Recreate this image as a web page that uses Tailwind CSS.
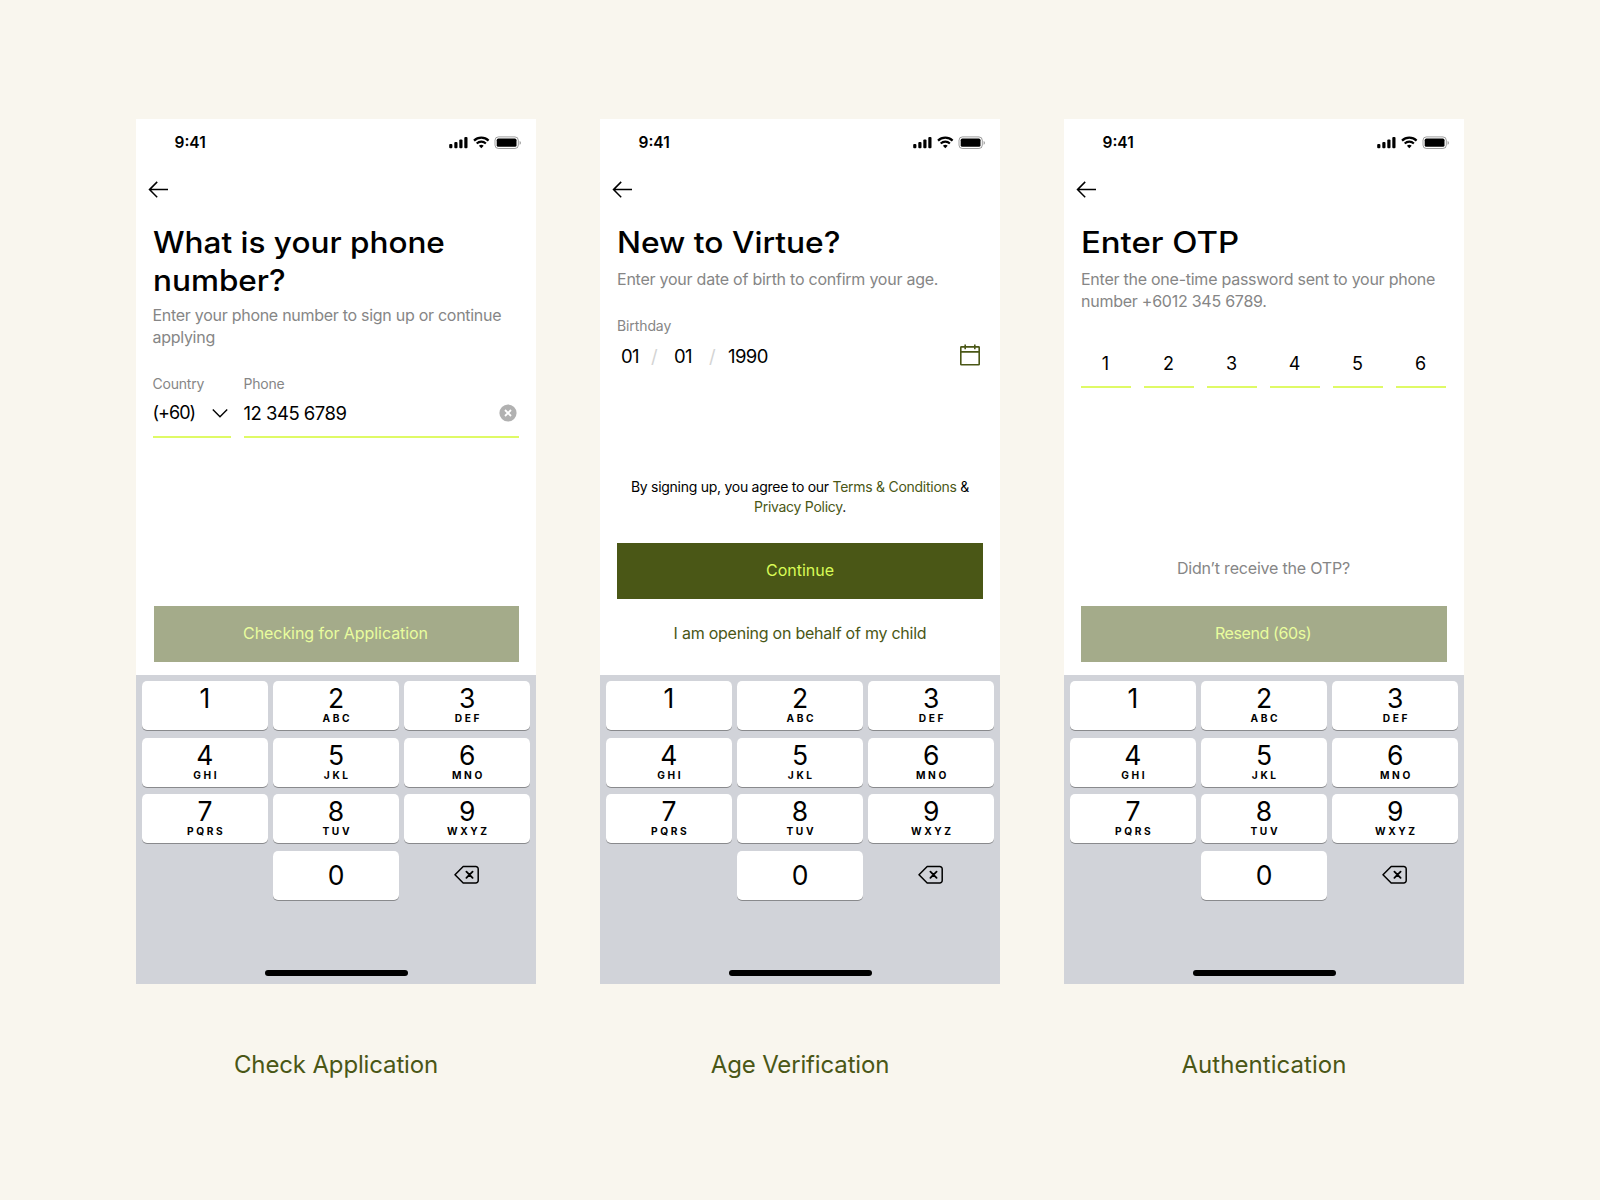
<!DOCTYPE html>
<html lang="en">
<head>
<meta charset="utf-8">
<title>Virtue onboarding</title>
<script src="https://cdn.jsdelivr.net/npm/@tailwindcss/browser@4"></script>
</head>
<body class="bg-[#f9f6ee] text-black font-['Inter',sans-serif]">

<template id="top-bar">
  <div class="flex h-[47px] items-center justify-between pl-[38.5px] pr-[15.5px]">
    <span class="text-[15.5px] font-semibold leading-5">9:41</span>
    <svg class="h-[14px] w-[72px]" viewBox="0 0 72 14" fill="none">
      <g fill="#000">
        <rect x="0.2" y="8" width="3.2" height="4.3" rx="1"/>
        <rect x="5.3" y="6" width="3.2" height="6.3" rx="1"/>
        <rect x="10.3" y="3.4" width="3.2" height="8.9" rx="1"/>
        <rect x="15.3" y="1" width="3.2" height="11.3" rx="1"/>
      </g>
      <path d="M25 4.6a10.6 10.6 0 0 1 14.6 0" stroke="#000" stroke-width="2.2"/>
      <path d="M27.7 7.5a6.7 6.7 0 0 1 9.2 0" stroke="#000" stroke-width="2.1"/>
      <path d="M29.9 9.8a3.6 3.6 0 0 1 4.8 0L32.3 12.3z" fill="#000"/>
      <rect x="46" y="0.9" width="23.3" height="11.6" rx="3.4" stroke="#000" stroke-opacity=".38"/>
      <rect x="47.7" y="2.6" width="19.8" height="8.2" rx="1.6" fill="#000"/>
      <path d="M70.6 5v3.8c.8-.4 1.3-1.1 1.3-1.9s-.5-1.5-1.3-1.9z" fill="#000" fill-opacity=".4"/>
    </svg>
  </div>
  <div class="flex h-[57px] pl-[11.5px] pt-[15px]">
    <svg class="h-[18px] w-[21px]" viewBox="0 0 21 18" fill="none" stroke="#000" stroke-width="1.5"><path d="M20 8.6H1.5M9.2 .9L1.5 8.6l7.7 7.7"/></svg>
  </div>
</template>

<template id="keypad">
  <div class="flex h-[309px] flex-col bg-[#d1d3d9] px-[6px] pt-[6px]">
    <div data-keys class="grid grid-cols-3 gap-x-[5.3px] gap-y-[7.5px]"></div>
    <div class="mx-auto mb-[8.5px] mt-auto h-[5.5px] w-[143px] rounded-full bg-black"></div>
  </div>
</template>

<template id="key">
  <div class="flex h-[49px] flex-col items-center rounded-[5px] bg-white pt-[3px] shadow-[0_1px_0_#898a8d]">
    <span data-digit class="text-[26.5px] leading-[28px]"></span>
    <span data-letters class="pl-[2.6px] text-[10.2px] font-bold leading-[12px] tracking-[2.6px]"></span>
  </div>
</template>

<template id="zero-key">
  <div class="flex h-[49px] items-center justify-center rounded-[5px] bg-white shadow-[0_1px_0_#898a8d]">
    <span class="text-[26.5px] leading-[28px]">0</span>
  </div>
</template>

<template id="backspace">
  <div class="flex h-[49px] items-center justify-center">
    <svg class="h-[20px] w-[26px]" viewBox="0 0 26 20" fill="none" stroke="#000" stroke-width="1.5" stroke-linejoin="round" stroke-linecap="round"><path d="M9.2 1.5h12.6a2.4 2.4 0 0 1 2.4 2.4v11.7a2.4 2.4 0 0 1-2.4 2.4H9.2L1 9.75z"/><path d="M12.4 6.6l6.2 6.2M18.600 6.6l-6.200 6.200" stroke-width="1.8"/></svg>
  </div>
</template>

<main class="flex h-[1200px] w-[1600px] justify-center gap-16 pt-[119px]">

  <section class="flex w-[400px] flex-col">
    <div class="flex h-[865px] flex-col bg-white">
      <div data-part="top-bar" class="contents"></div>
      <div class="flex flex-1 flex-col pb-[13px] pl-[16.5px] pr-[17px]">
        <h1 class="origin-left scale-x-[1.068] whitespace-nowrap text-[29.5px] font-medium leading-[38px]">What is your phone<br>number?</h1>
        <p class="mt-[5px] whitespace-nowrap text-[16px] leading-[22px] tracking-[-0.28px] text-[#868686]">Enter your phone number to sign up or continue<br>applying</p>
        <div class="mr-[0.5px] mt-[26px] flex gap-[13px]">
          <div class="w-[78px] border-b-2 border-[#dffa66] pb-[11px]">
            <div class="text-[14px] leading-5 tracking-[-0.2px] text-[#868686]">Country</div>
            <div class="mt-[7px] flex h-6 items-center justify-between pr-[3px]">
              <span class="text-[18px] leading-6 tracking-[-1px]">(+60)</span>
              <svg class="h-[10px] w-[16px]" viewBox="0 0 16 10" fill="none" stroke="#000" stroke-width="1.4"><path d="M.8 1.6L8 8.8l7.2-7.2"/></svg>
            </div>
          </div>
          <div class="flex-1 border-b-2 border-[#dffa66] pb-[11px]">
            <div class="text-[14px] leading-5 tracking-[-0.2px] text-[#868686]">Phone</div>
            <div class="mt-[7px] flex h-6 items-center justify-between pr-[1.5px]">
              <span class="text-[18.5px] leading-6 tracking-[-0.5px]">12 345 6789</span>
              <svg class="h-[18px] w-[18px]" viewBox="0 0 18 18"><circle cx="9" cy="9" r="8.6" fill="#b1b1b1"/><path d="M6 6l6 6M12 6l-6 6" stroke="#fff" stroke-width="1.8"/></svg>
            </div>
          </div>
        </div>
        <button class="ml-[1.5px] mt-auto h-[56px] bg-[#a4ab8a] pb-[2px] pr-[2px] text-[16px] tracking-[-0.06px] text-[#e9fd9e]">Checking for Application</button>
      </div>
      <div data-part="keypad" class="contents"></div>
    </div>
    <p class="mt-[65px] text-center text-[24px] leading-[32px] tracking-[-0.15px] text-[#4a5716]">Check Application</p>
  </section>

  <section class="flex w-[400px] flex-col">
    <div class="flex h-[865px] flex-col bg-white">
      <div data-part="top-bar" class="contents"></div>
      <div class="flex flex-1 flex-col pb-[13px] pl-[17px] pr-[17px]">
        <h1 class="origin-left scale-x-[1.075] whitespace-nowrap text-[29.5px] font-medium leading-[38px]">New to Virtue?</h1>
        <p class="mt-[7px] whitespace-nowrap text-[16px] leading-[22px] tracking-[-0.24px] text-[#868686]">Enter your date of birth to confirm your age.</p>
        <div class="mt-[26px] text-[14px] leading-5 tracking-[-0.1px] text-[#868686]">Birthday</div>
        <div class="mt-[8px] flex h-6 items-center text-[18.5px] leading-6 tracking-[-0.6px]">
          <span class="w-[34px] pl-[4px]">01</span>
          <span class="w-[23px] text-[#d4d4d4]">/</span>
          <span class="w-[35px]">01</span>
          <span class="w-[19px] text-[#d4d4d4]">/</span>
          <span>1990</span>
          <svg class="-mt-[2px] ml-auto mr-[2px] h-[22px] w-[22px]" viewBox="0 0 22 22" fill="none" stroke="#4a5716" stroke-width="1.6"><rect x="1.8" y="2.9" width="18.4" height="17.9" rx=".6"/><path d="M1.8 7.9h18.4M6.2 .4v4.8M15.8 .4v4.8"/></svg>
        </div>
        <p class="mt-auto text-center text-[14px] leading-5 tracking-[-0.27px]">By signing up, you agree to our <span class="text-[#4a5716]">Terms &amp; Conditions</span> &amp;<br><span class="text-[#4a5716]">Privacy Policy</span>.</p>
        <button class="mt-[26px] h-[56px] bg-[#4a5716] pb-[2px] text-[16px] text-[#d8fb56]">Continue</button>
        <button class="mt-[7px] h-[56px] pb-[2px] text-[16px] tracking-[-0.24px] text-[#4a5716]">I am opening on behalf of my child</button>
      </div>
      <div data-part="keypad" class="contents"></div>
    </div>
    <p class="mt-[65px] text-center text-[24px] leading-[32px] tracking-[-0.15px] text-[#4a5716]">Age Verification</p>
  </section>

  <section class="flex w-[400px] flex-col">
    <div class="flex h-[865px] flex-col bg-white">
      <div data-part="top-bar" class="contents"></div>
      <div class="flex flex-1 flex-col pb-[13px] pl-[17px] pr-[17px]">
        <h1 class="origin-left scale-x-[1.115] whitespace-nowrap text-[29.5px] font-medium leading-[38px]">Enter OTP</h1>
        <p class="mt-[7px] whitespace-nowrap text-[16px] leading-[22px] tracking-[-0.25px] text-[#868686]">Enter the one-time password sent to your phone<br>number +6012 345 6789.</p>
        <div class="mr-[1px] mt-[40px] grid grid-cols-6 gap-[13px] text-center text-[18px] leading-6">
          <span class="border-b-2 border-[#dffa66] pb-[10px] pr-[1px]">1</span>
          <span class="border-b-2 border-[#dffa66] pb-[10px] pr-[1px]">2</span>
          <span class="border-b-2 border-[#dffa66] pb-[10px] pr-[1px]">3</span>
          <span class="border-b-2 border-[#dffa66] pb-[10px] pr-[1px]">4</span>
          <span class="border-b-2 border-[#dffa66] pb-[10px] pr-[1px]">5</span>
          <span class="border-b-2 border-[#dffa66] pb-[10px] pr-[1px]">6</span>
        </div>
        <p class="mt-auto pr-[1px] text-center text-[16px] leading-[22px] tracking-[-0.19px] text-[#868686]">Didn’t receive the OTP?</p>
        <button class="mt-[27px] h-[56px] bg-[#a4ab8a] pb-[2px] pr-[2px] text-[16px] tracking-[-0.4px] text-[#e9fd9e]">Resend (60s)</button>
      </div>
      <div data-part="keypad" class="contents"></div>
    </div>
    <p class="mt-[65px] text-center text-[24px] leading-[32px] tracking-[0.05px] text-[#4a5716]">Authentication</p>
  </section>

</main>

<script>
  const copy = id => document.getElementById(id).content.cloneNode(true);
  const keys = [['1', ''], ['2', 'ABC'], ['3', 'DEF'], ['4', 'GHI'], ['5', 'JKL'], ['6', 'MNO'], ['7', 'PQRS'], ['8', 'TUV'], ['9', 'WXYZ']];
  document.querySelectorAll('[data-part]').forEach(el => el.append(copy(el.dataset.part)));
  document.querySelectorAll('[data-keys]').forEach(grid => {
    keys.forEach(([digit, letters]) => {
      const key = copy('key');
      key.querySelector('[data-digit]').textContent = digit;
      key.querySelector('[data-letters]').textContent = letters;
      grid.append(key);
    });
    grid.append(document.createElement('div'), copy('zero-key'), copy('backspace'));
  });
</script>
</body>
</html>
